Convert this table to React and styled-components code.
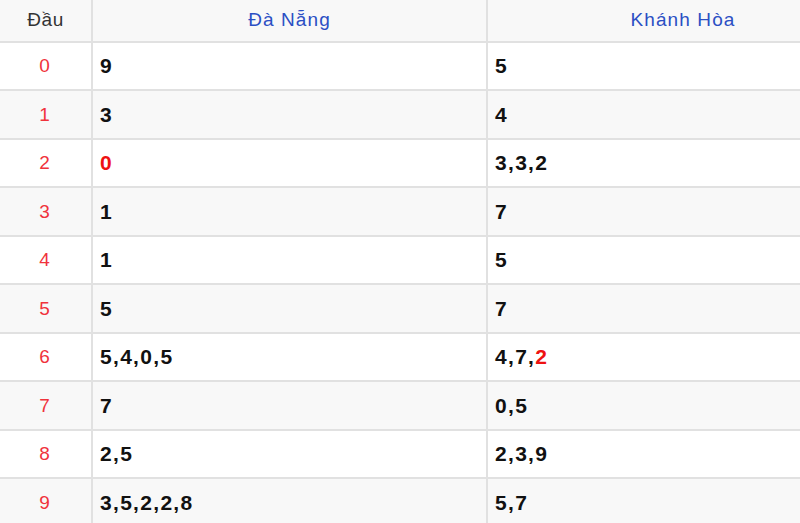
import React from "react";
import styled, { createGlobalStyle } from "styled-components";

const colors = {
  border: "#e1e1e1",
  stripe: "#f8f8f8",
  white: "#ffffff",
  head: "#333333",
  blue: "#2b4fc4",
  index: "#f0333c",
  hot: "#ee1111",
  font: "#111111",
};

const rows = [
  { head: 0, a: ["9"], b: ["5"] },
  { head: 1, a: ["3"], b: ["4"] },
  { head: 2, a: ["0!"], b: ["3", "3", "2"] },
  { head: 3, a: ["1"], b: ["7"] },
  { head: 4, a: ["1"], b: ["5"] },
  { head: 5, a: ["5"], b: ["7"] },
  { head: 6, a: ["5", "4", "0", "5"], b: ["4", "7", "2!"] },
  { head: 7, a: ["7"], b: ["0", "5"] },
  { head: 8, a: ["2", "5"], b: ["2", "3", "9"] },
  { head: 9, a: ["3", "5", "2", "2", "8"], b: ["5", "7"] },
];

const Numbers = ({ list }) =>
  list.map((n, i) => {
    const hot = n.endsWith("!");
    return (
      <React.Fragment key={i}>
        {i > 0 && ","}
        {hot ? <Hot>{n.slice(0, -1)}</Hot> : n}
      </React.Fragment>
    );
  });

const App = () => {
  return (
    <>
      <GlobalStyle />
      <Wrap>
        <Table>
          <colgroup>
            <col style={{ width: 92 }} />
            <col style={{ width: 395 }} />
            <col style={{ width: 392 }} />
          </colgroup>
          <thead>
            <tr>
              <HeadCell>Đầu</HeadCell>
              <HeadCell $blue>Đà Nẵng</HeadCell>
              <HeadCell $blue>Khánh Hòa</HeadCell>
            </tr>
          </thead>
          <tbody>
            {rows.map((r, i) => (
              <Row key={r.head} $odd={i % 2 === 1}>
                <IndexCell>{r.head}</IndexCell>
                <NumCell>
                  <Numbers list={r.a} />
                </NumCell>
                <NumCell>
                  <Numbers list={r.b} />
                </NumCell>
              </Row>
            ))}
          </tbody>
        </Table>
      </Wrap>
    </>
  );
};

const GlobalStyle = createGlobalStyle`
  body {
    margin: 0;
    background: ${colors.white};
    font-family: "Liberation Sans", Arial, sans-serif;
  }
`;

const Wrap = styled.div`
  width: 800px;
  height: 523px;
  overflow: hidden;
`;

const Table = styled.table`
  width: 879px;
  table-layout: fixed;
  border-collapse: collapse;
  margin-top: -1px;
`;

const HeadCell = styled.th`
  height: 40.5px;
  padding: 1px 0 0;
  background: ${colors.stripe};
  border: 2px solid ${colors.border};
  border-top: none;
  border-left: none;
  font-weight: normal;
  font-size: 19px;
  letter-spacing: ${(p) => (p.$blue ? "1.1px" : "0.6px")};
  text-align: center;
  vertical-align: middle;
  color: ${(p) => (p.$blue ? colors.blue : colors.head)};
`;

const Row = styled.tr`
  height: 48.5px;
  background: ${(p) => (p.$odd ? colors.stripe : colors.white)};
`;

const IndexCell = styled.td`
  padding: 1px 2px 0 0;
  border: 2px solid ${colors.border};
  border-left: none;
  text-align: center;
  font-size: 19px;
  color: ${colors.index};
`;

const NumCell = styled.td`
  padding: 1px 0 0 7px;
  border: 2px solid ${colors.border};
  font-size: 21px;
  letter-spacing: 1.3px;
  font-weight: bold;
  color: ${colors.font};
`;

const Hot = styled.span`
  color: ${colors.hot};
`;

export default App;
